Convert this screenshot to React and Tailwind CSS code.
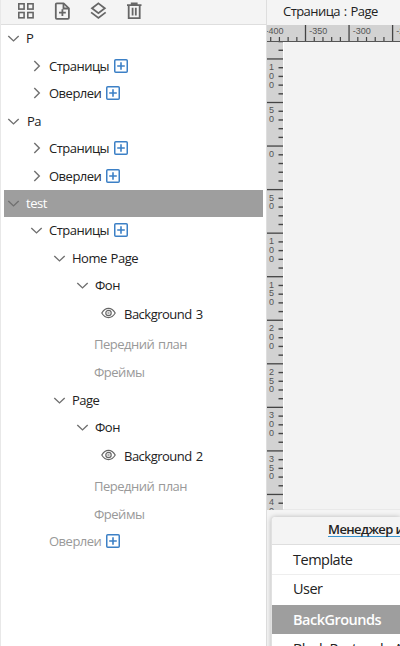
import React from 'react';

const rows = [
  { label: 'P', icon: 'down', pad: 'pl-[3px]', gap: 'mt-0', tx: 'ml-[6px]' },
  { label: 'Страницы', icon: 'right', pad: 'pl-[26px]', gap: 'mt-px', plus: true },
  { label: 'Оверлеи', icon: 'right', pad: 'pl-[26px]', gap: 'mt-0', plus: true },
  { label: 'Pa', icon: 'down', pad: 'pl-[3px]', gap: 'mt-px', tx: 'ml-[7px]' },
  { label: 'Страницы', icon: 'right', pad: 'pl-[26px]', gap: 'mt-0', plus: true },
  { label: 'Оверлеи', icon: 'right', pad: 'pl-[26px]', gap: 'mt-px', plus: true },
  { label: 'test', icon: 'down', pad: 'pl-[3px]', gap: 'mt-0', selected: true, tx: 'ml-[6px]' },
  { label: 'Страницы', icon: 'down', pad: 'pl-[26px]', gap: 'mt-0', plus: true },
  { label: 'Home Page', icon: 'down', pad: 'pl-[49px]', gap: 'mt-px' },
  { label: 'Фон', icon: 'down', pad: 'pl-[72px]', gap: 'mt-0' },
  { label: 'Background 3', icon: 'eye', pad: 'pl-[97px]', gap: 'mt-[2px]' },
  { label: 'Передний план', pad: 'pl-[90px]', gap: 'mt-[3px]', muted: true },
  { label: 'Фреймы', pad: 'pl-[90px]', gap: 'mt-px', muted: true },
  { label: 'Page', icon: 'down', pad: 'pl-[49px]', gap: 'mt-px' },
  { label: 'Фон', icon: 'down', pad: 'pl-[72px]', gap: 'mt-0' },
  { label: 'Background 2', icon: 'eye', pad: 'pl-[97px]', gap: 'mt-[2px]' },
  { label: 'Передний план', pad: 'pl-[90px]', gap: 'mt-[3px]', muted: true },
  { label: 'Фреймы', pad: 'pl-[90px]', gap: 'mt-px', muted: true },
  { label: 'Оверлеи', pad: 'pl-[45px]', gap: 'mt-0', muted: true, plus: true },
];

function Chevron({ right }) {
  return (
    <svg className="h-[14px] w-[13px] shrink-0" viewBox="0 0 13 14" fill="none" stroke="#707070" strokeWidth="1.4">
      <path d={right ? 'M4.3 2l5 5-5 5' : 'M1.3 4.9l5.2 5 5.2-5'} />
    </svg>
  );
}

function Eye() {
  return (
    <svg className="mb-[2px] h-[12px] w-[15px] shrink-0" viewBox="0 0 15 12" fill="none" stroke="#666" strokeWidth="1.2">
      <path d="M.8 6Q3.5 1.4 7.5 1.4T14.2 6Q11.5 10.6 7.5 10.6T.8 6Z" />
      <circle cx="7.5" cy="6" r="2.7" />
      <circle cx="7.5" cy="6" r=".8" strokeWidth=".6" />
    </svg>
  );
}

function Plus() {
  return (
    <svg className="ml-[4.4px] h-[14px] w-[14px] shrink-0" viewBox="0 0 14 14" fill="none" stroke="#3c80c6">
      <rect x=".75" y=".75" width="12.5" height="12.5" rx="1" strokeWidth="1.5" />
      <path d="M7 3.2v7.6M3.2 7h7.6" strokeWidth="1.6" />
    </svg>
  );
}

function Row({ label, icon, pad, gap, tx, plus, selected, muted }) {
  const color = selected ? 'bg-[#9e9e9e] text-white' : muted ? 'text-[#999]' : 'text-[#222]';
  const margin = tx || (icon === 'eye' ? 'ml-[8px]' : icon ? 'ml-[6px]' : 'ml-0');
  return (
    <div className={`flex h-[27px] shrink-0 items-center pb-px ${pad} ${gap} ${color}`}>
      {icon === 'eye' && <Eye />}
      {(icon === 'down' || icon === 'right') && <Chevron right={icon === 'right'} />}
      <span className={`whitespace-nowrap text-[13px] leading-[18px] tracking-[-0.5px] [word-spacing:1px] ${margin}`}>{label}</span>
      {plus && <Plus />}
    </div>
  );
}

function Toolbar() {
  return (
    <div className="flex h-[25px] shrink-0 border-b border-[#dedede] bg-[#f4f4f4] pl-[16px] pt-[2px]">
      <svg className="h-[18px] w-[18px]" viewBox="0 0 18 18" fill="none" stroke="#666" strokeWidth="1.6">
        <rect x="1.8" y="1.8" width="5.3" height="5.3" />
        <rect x="10.8" y="1.8" width="5.3" height="5.3" />
        <rect x="1.8" y="10.5" width="5.3" height="5.3" />
        <rect x="10.8" y="10.5" width="5.3" height="5.3" />
      </svg>
      <svg className="ml-[18px] h-[18px] w-[18px]" viewBox="0 0 18 18" fill="none" stroke="#666" strokeWidth="1.8">
        <path d="M10.6 1.3H3.8Q2.8 1.3 2.8 2.3v13.5q0 1 1 1h11.1q1 0 1-1V6.3z" strokeLinejoin="round" />
        <path d="M10.5 1.3v5.2h5.2M9.4 7.3v6.8M6 10.7h6.8" />
      </svg>
      <svg className="ml-[18px] h-[18px] w-[18px]" viewBox="0 0 18 18" fill="none" stroke="#666" strokeWidth="1.8">
        <path d="M9.4 1.4l6.4 4.9-6.4 4.9L3 6.3z" />
        <path d="M2.1 10.4l7.3 5.5 7.3-5.5" />
      </svg>
      <svg className="ml-[18px] h-[18px] w-[18px]" viewBox="0 0 18 18" fill="none" stroke="#666" strokeWidth="1.8">
        <path d="M2 3.2h14.5M6.7 2.9V1.5h5v1.4M3.7 3.2v12.9h11V3.2M7.6 5.8v7.8M10.8 5.8v7.8" />
      </svg>
    </div>
  );
}

const STEP = 43.55;

function HorizontalRuler() {
  return (
    <svg className="block h-[17px] w-[133px] shrink-0 bg-[#d2d2d2]" viewBox="0 0 133 17">
      {[-5.1, 38.45, 82, 125.55].map((x, i) => (
        <g key={i}>
          <rect x={x - 0.6} y="0" width="1.3" height="17" fill="#444" />
          {[1, 2, 3, 4].map((n) => (
            <rect key={n} x={x + (n * STEP) / 5 - 0.5} y="12" width="1.2" height="5" fill="#444" />
          ))}
          <text x={x + 3.7} y="9.3" fontSize="9" fill="#555" fontFamily="Liberation Sans, sans-serif">
            {['-400', '-350', '-300', '-250'][i]}
          </text>
        </g>
      ))}
      <rect y="16" width="133" height="1" fill="#555" />
    </svg>
  );
}

function VerticalRuler() {
  const labels = ['', '100', '50', '0', '50', '100', '150', '200', '250', '300', '350', '400'];
  return (
    <svg className="block h-[468px] w-4 shrink-0 bg-[#d2d2d2]" viewBox="0 0 16 468">
      {labels.map((label, i) => {
        const y = 16.9 + (i - 1) * STEP;
        return (
          <g key={i}>
            <rect y={y - 0.6} width="16" height="1.3" fill="#444" />
            {[1, 2, 3, 4].map((n) => (
              <rect key={n} x="11.5" y={y + (n * STEP) / 5 - 0.6} width="4.5" height="1.4" fill="#444" />
            ))}
            {label.split('').map((d, n) => (
              <text key={n} x="2" y={y + 11 + n * 8.8} fontSize="9" fill="#555" fontFamily="Liberation Sans, sans-serif">
                {d}
              </text>
            ))}
          </g>
        );
      })}
    </svg>
  );
}

function ManagerRow({ children, className }) {
  return (
    <div className={`flex shrink-0 items-center whitespace-nowrap pl-[21px] text-[14.5px] leading-[20px] tracking-[-0.5px] ${className}`}>
      {children}
    </div>
  );
}

export default function App() {
  return (
    <div className="flex h-[646px] w-[400px] overflow-hidden bg-white font-['Open_Sans',sans-serif]">
      <aside className="flex w-[266px] shrink-0 flex-col border-l border-[#e8e8e8]">
        <Toolbar />
        <div className="ml-[3px] mr-[3px] flex flex-col">
          {rows.map((row, i) => (
            <Row key={i} {...row} />
          ))}
        </div>
      </aside>
      <main className="flex w-[134px] shrink-0 flex-col border-l border-[#dedede] bg-[#f4f4f4]">
        <div className="flex h-[25px] shrink-0 items-center whitespace-nowrap pb-[4px] pl-4 text-[13px] leading-[18px] tracking-[-0.55px] text-[#222] [word-spacing:1px]">
          Страница : Page
        </div>
        <HorizontalRuler />
        <div className="flex h-[468px] shrink-0 border-b border-[#e9e9e9]">
          <VerticalRuler />
          <div className="flex-1 border-l border-white bg-[#f3f3f3]" />
        </div>
        <section className="ml-[4px] mt-[7px] flex flex-1 flex-col rounded-tl-[4px] border-l border-[#e0e0e0] bg-white text-[#222] shadow-[0_0_5px_rgba(0,0,0,0.25)]">
          <div className="flex h-[28px] shrink-0 items-center whitespace-nowrap rounded-tl-[4px] border-b border-[#dedede] bg-[#f4f4f4] pb-[3px] pl-[56px] text-[13px] font-semibold tracking-[-0.6px]">
            <span className="border-b border-[#3994cf] leading-[14px]">Менеджер изображений</span>
          </div>
          <ManagerRow className="h-[30px] border-b border-[#eee]">Template</ManagerRow>
          <ManagerRow className="h-[30px] pb-[2px]">User</ManagerRow>
          <ManagerRow className="h-[30px] border-b border-white bg-[#9e9e9e] font-semibold text-white">BackGrounds</ManagerRow>
          <ManagerRow className="h-[30px] pb-[3px]">Black Rectangle Area</ManagerRow>
        </section>
      </main>
    </div>
  );
}
